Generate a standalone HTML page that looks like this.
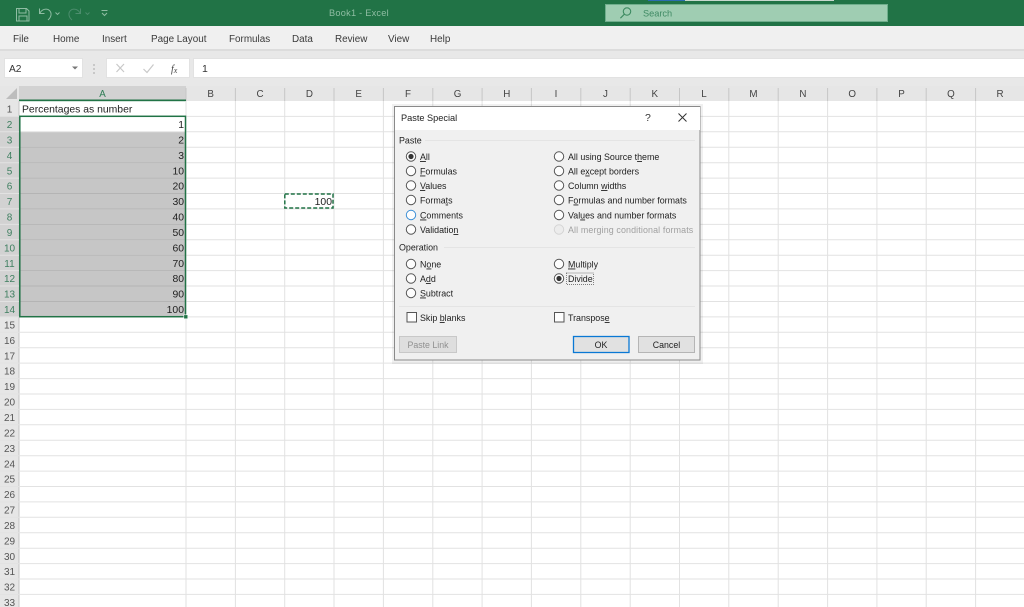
<!DOCTYPE html>
<html><head><meta charset="utf-8"><title>Book1 - Excel</title>
<style>
html,body{margin:0;padding:0;background:#fff;width:1024px;height:607px;overflow:hidden}
svg{display:block;font-family:"Liberation Sans",sans-serif;filter:blur(.35px)}
.tab{font-size:9.9px;fill:#3a3a3a}
.hd{font-size:9.800px;fill:#444;text-anchor:middle}
.rn{font-size:10px;fill:#555;text-anchor:middle}
.rs{font-size:10px;fill:#3f7f60;text-anchor:middle}
.c{font-size:10.400px;fill:#222;text-anchor:end}
.d{font-size:8.900px;fill:#222}
.r{fill:#fdfdfd;stroke:#555;stroke-width:1}
</style></head><body>
<svg width="1024" height="607" viewBox="0 0 1024 607" xmlns="http://www.w3.org/2000/svg">
<rect width="1024" height="607" fill="#fff"/>
<!-- title bar -->
<rect width="1024" height="26" fill="#217346"/>
<rect x="648" y="0" width="37" height="1" fill="#2b6cb0"/><rect x="685" y="0" width="149" height="1" fill="#c8d8cf"/>
<g fill="none" stroke="#8fbda3" stroke-width="1">
<path d="M16.500 8.500h10l2.500 2.500v10h-12.500z"/><path d="M19 8.500v4.500h7v-4.500M19 21v-5h8v5"/>
<path d="M39.500 8.500v5h5M40 13c2-4 7-5 9.500-2.500 2.500 2.500 2 6.500-1.500 9.500"/>
<path d="M55.500 12.500l2 2 2-2" stroke-width=".9"/>
</g>
<g fill="none" stroke="#4c8d6d" stroke-width="1">
<path d="M80.500 8.500v5h-5M80 13c-2-4-7-5-9.500-2.500-2.500 2.500-2 6.500 1.500 9.500"/>
<path d="M85.500 12.500l2 2 2-2" stroke-width=".9"/>
</g>
<g fill="none" stroke="#8fbda3" stroke-width="1"><path d="M101.500 10.500h6"/><path d="M102 13l2.500 2.500 2.500-2.500"/></g>
<text x="329" y="16" font-size="9.200" letter-spacing=".25" fill="#8fbda3">Book1  -  Excel</text>
<rect x="605.500" y="4.500" width="282" height="17" fill="#9fcdb2" stroke="#6fae8c"/>
<g fill="none" stroke="#3c8a60" stroke-width="1.100"><circle cx="627" cy="11.500" r="3.700"/><path d="M624.400 14.200l-4 4"/></g>
<text x="643" y="16.500" font-size="9.200" fill="#3f8a64">Search</text>
<!-- ribbon tabs -->
<rect y="26" width="1024" height="23" fill="#f0f0f0"/>
<rect y="49" width="1024" height="2" fill="#dcdcdc"/>
<text class="tab" x="13" y="42">File</text>
<text class="tab" x="53" y="42">Home</text>
<text class="tab" x="102" y="42">Insert</text>
<text class="tab" x="151" y="42">Page Layout</text>
<text class="tab" x="229" y="42">Formulas</text>
<text class="tab" x="292" y="42">Data</text>
<text class="tab" x="335" y="42">Review</text>
<text class="tab" x="388" y="42">View</text>
<text class="tab" x="430" y="42">Help</text>
<!-- formula bar -->
<rect y="51" width="1024" height="35" fill="#e8e8e8"/>
<rect x="4.500" y="58.500" width="78" height="19" fill="#fff" stroke="#e2e2e2"/>
<text x="9" y="72" font-size="10.200" fill="#333">A2</text>
<path d="M72 66.500h6l-3 3z" fill="#777"/>
<g fill="#c8c8c8"><rect x="93" y="64" width="2" height="2"/><rect x="93" y="68" width="2" height="2"/><rect x="93" y="72" width="2" height="2"/></g>
<rect x="106.500" y="58.500" width="83" height="19" fill="#fff" stroke="#e2e2e2"/>
<g fill="none" stroke="#c8c8c8" stroke-width="1.200"><path d="M116.500 64l7.500 8M124 64l-7.500 8"/><path d="M143.500 69l3.500 3.500 6.500-8"/></g>
<text x="171" y="72" font-size="10" font-style="italic" font-family="Liberation Serif" fill="#444">f<tspan font-size="8" dy="1">x</tspan></text>
<rect x="193.500" y="58.500" width="832" height="19" fill="#fff" stroke="#e2e2e2"/>
<text x="202" y="72" font-size="10.500" fill="#333">1</text>
<!-- column header -->
<rect y="86" width="1024" height="15" fill="#e6e6e6"/>
<rect x="19" y="86" width="167" height="14" fill="#d2d2d2"/>
<path d="M17 88v11h-11z" fill="#bdbdbd"/>
<path d="M235.400 88V101M284.700 88V101M334 88V101M383.400 88V101M432.800 88V101M482.100 88V101M531.400 88V101M580.800 88V101M630.200 88V101M679.500 88V101M728.800 88V101M778.200 88V101M827.600 88V101M876.900 88V101M926.200 88V101M975.600 88V101M186 88V101" stroke="#c6c6c6" stroke-width="1" fill="none"/>
<rect x="19" y="99.500" width="167" height="1.700" fill="#217346"/>
<text class="hd" x="102.500" y="97" style="fill:#2f7d55">A</text>
<text class="hd" x="210.700" y="97">B</text><text class="hd" x="260" y="97">C</text><text class="hd" x="309.400" y="97">D</text><text class="hd" x="358.700" y="97">E</text><text class="hd" x="408" y="97">F</text><text class="hd" x="457.500" y="97">G</text><text class="hd" x="506.800" y="97">H</text><text class="hd" x="556" y="97">I</text><text class="hd" x="605.500" y="97">J</text><text class="hd" x="654.800" y="97">K</text><text class="hd" x="704" y="97">L</text><text class="hd" x="753.500" y="97">M</text><text class="hd" x="802.900" y="97">N</text><text class="hd" x="852.200" y="97">O</text><text class="hd" x="901.500" y="97">P</text><text class="hd" x="950.900" y="97">Q</text><text class="hd" x="1000" y="97">R</text>
<!-- row header -->
<rect x="0" y="101" width="19" height="506" fill="#e6e6e6"/>
<rect x="0" y="116.400" width="19" height="200.500" fill="#d2d2d2"/>
<rect x="18.500" y="101" width="1" height="506" fill="#c4c4c4"/>
<!-- selection fill -->
<rect x="19" y="131.800" width="167" height="185" fill="#c6c6c6"/>
<!-- grid -->
<path d="M0 116.400H1024M0 131.800H1024M0 147.300H1024M0 162.700H1024M0 178.100H1024M0 193.500H1024M0 208.900H1024M0 224.400H1024M0 239.800H1024M0 255.200H1024M0 270.600H1024M0 286H1024M0 301.500H1024M0 316.900H1024M0 332.300H1024M0 347.700H1024M0 363.100H1024M0 378.600H1024M0 394H1024M0 409.400H1024M0 424.800H1024M0 440.200H1024M0 455.700H1024M0 471.100H1024M0 486.500H1024M0 501.900H1024M0 517.300H1024M0 532.800H1024M0 548.200H1024M0 563.600H1024M0 579H1024M0 594.400H1024" stroke="#e2e2e2" stroke-width="1" fill="none"/>
<path d="M19 147.300H186M19 162.700H186M19 178.100H186M19 193.500H186M19 208.900H186M19 224.400H186M19 239.800H186M19 255.200H186M19 270.600H186M19 286H186M19 301.500H186" stroke="#b4b4b4" stroke-width="1" fill="none"/>
<path d="M186 101V607M235.400 101V607M284.700 101V607M334 101V607M383.400 101V607M432.800 101V607M482.100 101V607M531.400 101V607M580.800 101V607M630.200 101V607M679.500 101V607M728.800 101V607M778.200 101V607M827.600 101V607M876.900 101V607M926.200 101V607M975.600 101V607" stroke="#e2e2e2" stroke-width="1" fill="none"/>
<!-- row numbers -->
<text class="rn" x="9.500" y="112.500">1</text>
<text class="rs" x="9.500" y="128">2</text><text class="rs" x="9.500" y="143.500">3</text><text class="rs" x="9.500" y="159">4</text><text class="rs" x="9.500" y="174.300">5</text><text class="rs" x="9.500" y="189.700">6</text><text class="rs" x="9.500" y="205">7</text><text class="rs" x="9.500" y="220.500">8</text><text class="rs" x="9.500" y="236">9</text><text class="rs" x="9.500" y="251.400">10</text><text class="rs" x="9.500" y="266.800">11</text><text class="rs" x="9.500" y="282.200">12</text><text class="rs" x="9.500" y="297.600">13</text><text class="rs" x="9.500" y="313.100">14</text>
<text class="rn" x="9.500" y="328.500">15</text><text class="rn" x="9.500" y="343.900">16</text><text class="rn" x="9.500" y="359.300">17</text><text class="rn" x="9.500" y="374.700">18</text><text class="rn" x="9.500" y="390.200">19</text><text class="rn" x="9.500" y="405.600">20</text><text class="rn" x="9.500" y="421">21</text><text class="rn" x="9.500" y="436.400">22</text><text class="rn" x="9.500" y="451.800">23</text><text class="rn" x="9.500" y="467.300">24</text><text class="rn" x="9.500" y="482.700">25</text><text class="rn" x="9.500" y="498.100">26</text><text class="rn" x="9.500" y="513.500">27</text><text class="rn" x="9.500" y="528.900">28</text><text class="rn" x="9.500" y="544.400">29</text><text class="rn" x="9.500" y="559.800">30</text><text class="rn" x="9.500" y="575.200">31</text><text class="rn" x="9.500" y="590.600">32</text><text class="rn" x="9.500" y="606">33</text>
<!-- cells -->
<text x="22" y="112.500" font-size="10.400" fill="#222">Percentages as number</text>
<text class="c" x="184" y="128">1</text><text class="c" x="184" y="143.500">2</text><text class="c" x="184" y="159">3</text><text class="c" x="184" y="174.300">10</text><text class="c" x="184" y="189.700">20</text><text class="c" x="184" y="205">30</text><text class="c" x="184" y="220.500">40</text><text class="c" x="184" y="236">50</text><text class="c" x="184" y="251.400">60</text><text class="c" x="184" y="266.800">70</text><text class="c" x="184" y="282.200">80</text><text class="c" x="184" y="297.600">90</text><text class="c" x="184" y="313.100">100</text>
<rect x="19.800" y="116.300" width="165.700" height="200.400" fill="none" stroke="#217346" stroke-width="1.500"/>
<rect x="183.800" y="314.800" width="4" height="4" fill="#217346" stroke="#fff" stroke-width=".6"/>
<text class="c" x="332" y="205">100</text>
<rect x="284.800" y="194" width="48.200" height="14" fill="none" stroke="#217346" stroke-width="1.500" stroke-dasharray="4 2"/>
<!-- dialog -->
<rect x="392" y="104" width="311" height="260" fill="#000" opacity=".06"/>
<rect x="394.500" y="106.500" width="305.500" height="253.500" fill="#f0f0f0" stroke="#8a8a8a"/>
<rect x="395" y="107" width="305" height="23" fill="#fff"/>
<text x="401" y="121" font-size="9.200" fill="#222">Paste Special</text>
<text x="645" y="121" font-size="10.500" fill="#333">?</text>
<path d="M678.500 113.500l8 8M686.500 113.500l-8 8" stroke="#333" stroke-width="1" fill="none"/>
<text class="d" x="399" y="143.500">Paste</text><path d="M425 140.500H695" stroke="#e4e4e4"/>
<circle class="r" cx="411" cy="156.500" r="4.700"/><circle cx="411" cy="156.500" r="2.600" fill="#333"/>
<text class="d" x="420" y="160"><tspan text-decoration="underline">A</tspan>ll</text>
<circle class="r" cx="411" cy="171" r="4.700"/><text class="d" x="420" y="174.500"><tspan text-decoration="underline">F</tspan>ormulas</text>
<circle class="r" cx="411" cy="185.500" r="4.700"/><text class="d" x="420" y="189"><tspan text-decoration="underline">V</tspan>alues</text>
<circle class="r" cx="411" cy="200" r="4.700"/><text class="d" x="420" y="203.500">Forma<tspan text-decoration="underline">t</tspan>s</text>
<circle class="r" cx="411" cy="215" r="4.700" style="stroke:#3c8fd6"/><text class="d" x="420" y="218.500"><tspan text-decoration="underline">C</tspan>omments</text>
<circle class="r" cx="411" cy="229.500" r="4.700"/><text class="d" x="420" y="233">Validatio<tspan text-decoration="underline">n</tspan></text>
<circle class="r" cx="559" cy="156.500" r="4.700"/><text class="d" x="568" y="160">All using Source t<tspan text-decoration="underline">h</tspan>eme</text>
<circle class="r" cx="559" cy="171" r="4.700"/><text class="d" x="568" y="174.500">All e<tspan text-decoration="underline">x</tspan>cept borders</text>
<circle class="r" cx="559" cy="185.500" r="4.700"/><text class="d" x="568" y="189">Column <tspan text-decoration="underline">w</tspan>idths</text>
<circle class="r" cx="559" cy="200" r="4.700"/><text class="d" x="568" y="203.500">F<tspan text-decoration="underline">o</tspan>rmulas and number formats</text>
<circle class="r" cx="559" cy="215" r="4.700"/><text class="d" x="568" y="218.500">Val<tspan text-decoration="underline">u</tspan>es and number formats</text>
<circle class="r" cx="559" cy="229.500" r="4.700" style="stroke:#d4d4d4;fill:#ececec"/><text class="d" x="568" y="233" letter-spacing=".13" style="fill:#a0a0a0">All merging conditional formats</text>
<text class="d" x="399" y="250.500">Operation</text><path d="M444 247.500H695" stroke="#e4e4e4"/>
<circle class="r" cx="411" cy="264" r="4.700"/><text class="d" x="420" y="267.500">N<tspan text-decoration="underline">o</tspan>ne</text>
<circle class="r" cx="411" cy="278.500" r="4.700"/><text class="d" x="420" y="282">A<tspan text-decoration="underline">d</tspan>d</text>
<circle class="r" cx="411" cy="293" r="4.700"/><text class="d" x="420" y="296.500"><tspan text-decoration="underline">S</tspan>ubtract</text>
<circle class="r" cx="559" cy="264" r="4.700"/><text class="d" x="568" y="267.500"><tspan text-decoration="underline">M</tspan>ultiply</text>
<circle class="r" cx="559" cy="278.500" r="4.700"/><circle cx="559" cy="278.500" r="2.600" fill="#333"/>
<text class="d" x="568" y="282">Divide</text><rect x="566.500" y="273" width="27" height="11.500" fill="none" stroke="#555" stroke-width=".7" stroke-dasharray="1 1"/>
<path d="M399 306.500H695" stroke="#e4e4e4"/>
<rect x="407" y="312.500" width="9.500" height="9.500" fill="#fdfdfd" stroke="#555"/><text class="d" x="420" y="321">Skip <tspan text-decoration="underline">b</tspan>lanks</text>
<rect x="554.500" y="312.500" width="9.500" height="9.500" fill="#fdfdfd" stroke="#555"/><text class="d" x="568" y="321">Transpos<tspan text-decoration="underline">e</tspan></text>
<rect x="399.500" y="336.500" width="57" height="16" fill="#dedede" stroke="#c8c8c8"/><text x="428" y="348" font-size="8.800" fill="#909090" text-anchor="middle">Paste Link</text>
<rect x="573.500" y="336.500" width="55.500" height="16" fill="#e1e1e1" stroke="#0a78d4" stroke-width="1.300"/><text x="601" y="348" font-size="8.800" fill="#222" text-anchor="middle">OK</text>
<rect x="638.500" y="336.500" width="56" height="16" fill="#e1e1e1" stroke="#b5b5b5"/><text x="666.500" y="348" font-size="8.800" fill="#222" text-anchor="middle">Cancel</text>
</svg>
</body></html>
